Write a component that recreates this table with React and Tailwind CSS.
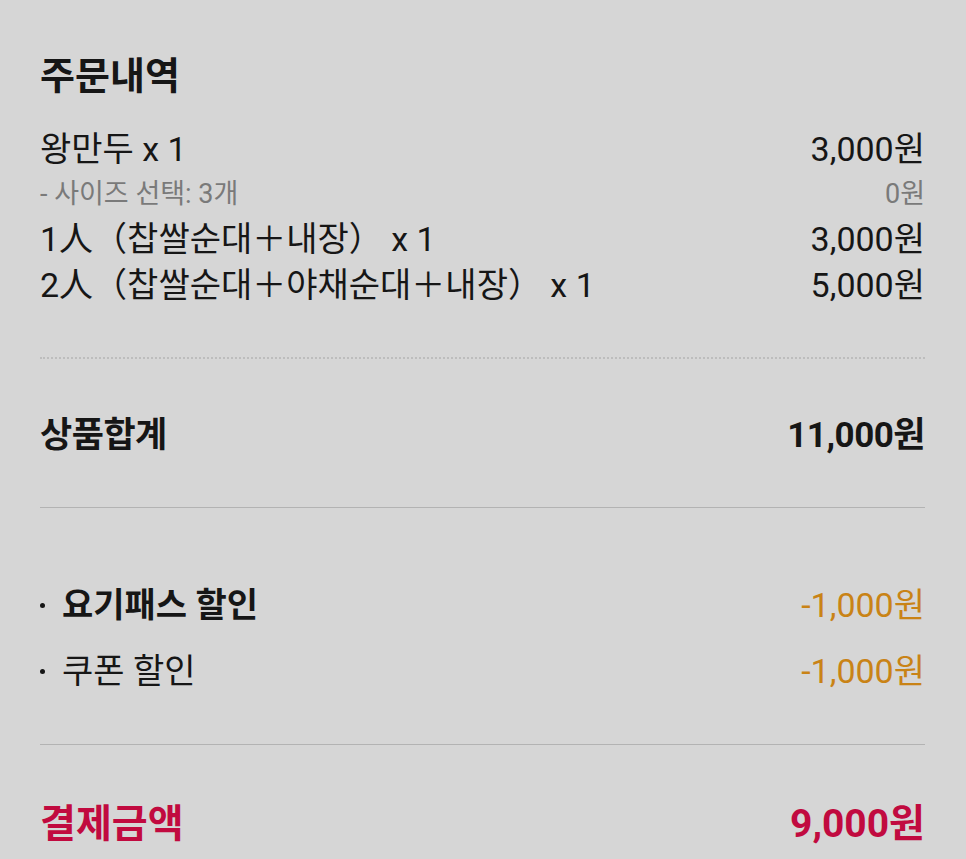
import React from 'react';

const items = [
  { name: '왕만두 x 1', price: '3,000원' },
  { name: '- 사이즈 선택: 3개', price: '0원', sub: true },
  { name: '1人（찹쌀순대＋내장） x 1', price: '3,000원' },
  { name: '2人（찹쌀순대＋야채순대＋내장） x 1', price: '5,000원' },
];

const discounts = [
  { name: '요기패스 할인', price: '-1,000원', strong: true },
  { name: '쿠폰 할인', price: '-1,000원' },
];

const App = () => {
  return (
    <div
      className="min-h-[859px] bg-[#d6d6d6] pl-10 pr-[41px] pt-[50px] text-[#161616]"
      style={{ fontFamily: 'Roboto, "Noto Sans CJK KR", sans-serif' }}
    >
      <h1 className="text-[38px] font-bold leading-[52px]">주문내역</h1>

      <div className="mt-[24px]">
        {items.map((item) =>
          item.sub ? (
            <div key={item.name} className="flex justify-between text-[27px] leading-[44px] text-[#7a7a7a]">
              <span>{item.name}</span>
              <span>{item.price}</span>
            </div>
          ) : (
            <div key={item.name} className="flex justify-between text-[34px] leading-[46px]">
              <span className="whitespace-pre">{item.name}</span>
              <span>{item.price}</span>
            </div>
          )
        )}
      </div>

      <div className="mt-[49px] border-t-2 border-dotted border-[#bdbdbd]" />

      <div className="flex justify-between pt-[55px] pb-[49px] text-[35px] font-bold leading-[44px] tracking-[-0.5px]">
        <span>상품합계</span>
        <span>11,000원</span>
      </div>

      <div className="border-t border-[#b3b3b3]" />

      <div className="pt-[74px] pb-[50px]">
        {discounts.map((d, i) => (
          <div
            key={d.name}
            className={`flex items-center justify-between text-[34px] leading-[46px] ${i > 0 ? 'mt-[20px]' : ''}`}
          >
            <span className={`flex items-center ${d.strong ? 'font-semibold' : ''}`}>
              <span className="mr-[17px] h-[5px] w-[5px] rounded-full bg-[#161616]" />
              {d.name}
            </span>
            <span className="text-[#c98316]">{d.price}</span>
          </div>
        ))}
      </div>

      <div className="border-t border-[#b3b3b3]" />

      <div className="flex justify-between pt-[53px] text-[39px] font-bold leading-[52px] text-[#c10a3f]">
        <span>결제금액</span>
        <span>9,000원</span>
      </div>
    </div>
  );
};

export default App;
